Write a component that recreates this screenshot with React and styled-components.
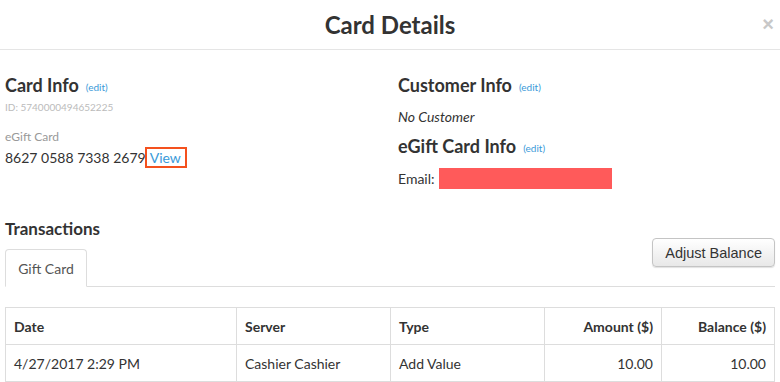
import styled, { createGlobalStyle } from "styled-components"

const GlobalStyle = createGlobalStyle`
  body {
    margin: 0;
    background: #fff;
    font-family: Lato, "Open Sans", sans-serif;
    color: #333;
  }
`

const Modal = styled.div`
  width: 780px;
  height: 382px;
  overflow: hidden;
  background: #fff;
`

const Header = styled.div`
  position: relative;
  height: 49px;
  border-bottom: 1px solid #e5e5e5;
  display: flex;
  align-items: center;
  justify-content: center;
`

const Title = styled.h1`
  margin: 0;
  font-size: 24px;
  font-weight: 700;
  color: #333;
`

const Close = styled.span`
  position: absolute;
  right: 6px;
  top: 13px;
  font-family: "Liberation Sans", Arial, sans-serif;
  font-size: 20px;
  font-weight: 700;
  color: #c8c8c8;
`

const Body = styled.div`
  padding: 0 5px;
`

const InfoGrid = styled.div`
  display: grid;
  grid-template-columns: 393px 1fr;
  padding-top: 24px;
`

const Column = styled.div`
  display: flex;
  flex-direction: column;
`

const SectionTitle = styled.h3`
  margin: 0;
  font-size: ${p => p.$size || 18}px;
  font-weight: 700;
  color: #333;
  line-height: 22px;
`

const Edit = styled.a`
  font-size: 10px;
  font-weight: 400;
  color: #3a9ad9;
  margin-left: 7px;
  vertical-align: 1px;
`

const Muted = styled.div`
  font-size: ${p => p.$size}px;
  color: ${p => p.$color};
  margin-top: ${p => p.$top}px;
  line-height: 16px;
`

const CardNumber = styled.div`
  font-size: 14px;
  color: #333;
  line-height: 18px;
  margin-top: 2px;
  display: flex;
  align-items: center;
`

const ViewLink = styled.a`
  color: #3a9ad9;
  border: 2px solid #f4511e;
  margin-left: -1px;
  padding: 0 4px 0 3px;
  line-height: 17px;
`

const Italic = styled.div`
  font-style: italic;
  font-size: 14px;
  margin: 10px 0 9px;
  line-height: 18px;
`

const EmailRow = styled.div`
  display: flex;
  align-items: center;
  font-size: 14px;
  margin-top: 9px;
`

const Redacted = styled.span`
  display: inline-block;
  width: 173px;
  height: 21px;
  background: #ff5a5a;
  margin-left: 4px;
`

const TxHeader = styled.div`
  margin-top: 29px;
`

const TabRow = styled.div`
  display: flex;
  align-items: flex-end;
  border-bottom: 1px solid #ddd;
  margin-top: 9px;
  height: 37px;
  position: relative;
`

const Tab = styled.div`
  width: 80px;
  height: 36px;
  border: 1px solid #ddd;
  border-bottom-color: #fff;
  border-radius: 4px 4px 0 0;
  margin-bottom: -1px;
  display: flex;
  align-items: center;
  justify-content: center;
  font-size: 14px;
  color: #555;
  background: #fff;
`

const Button = styled.button`
  position: absolute;
  right: 0;
  top: -11px;
  height: 29px;
  padding: 0 12px;
  font-family: "Liberation Sans", Arial, sans-serif;
  font-size: 14.5px;
  color: #333;
  border: 1px solid #c4c4c4;
  border-radius: 4px;
  background: linear-gradient(#fff, #e8e8e8);
  box-shadow: 0 1px 1px rgba(0,0,0,.12);
`

const Table = styled.table`
  margin-top: 20px;
  width: 100%;
  table-layout: fixed;
  border-collapse: collapse;
  border: 1px solid #ddd;
  font-size: 14px;
`

const Th = styled.th`
  border: 1px solid #ddd;
  height: 36px;
  padding: 0 8px;
  text-align: ${p => p.$right ? "right" : "left"};
  font-weight: 700;
  color: #333;
  width: ${p => p.$w ? `${p.$w}px` : "auto"};
  white-space: nowrap;
`

const Td = styled.td`
  border: 1px solid #ddd;
  height: 36px;
  padding: 0 8px;
  text-align: ${p => p.$right ? "right" : "left"};
  color: #333;
  white-space: nowrap;
`

export default function App() {
  return (
    <Modal>
      <GlobalStyle />
      <Header>
        <Title>Card Details</Title>
        <Close>×</Close>
      </Header>
      <Body>
        <InfoGrid>
          <Column>
            <SectionTitle>Card Info<Edit>(edit)</Edit></SectionTitle>
            <Muted $size={10} $color="#bbb" $top={1}>ID: 5740000494652225</Muted>
            <Muted $size={12} $color="#999" $top={14}>eGift Card</Muted>
            <CardNumber>8627 0588 7338 2679<ViewLink>View</ViewLink></CardNumber>
          </Column>
          <Column>
            <SectionTitle>Customer Info<Edit>(edit)</Edit></SectionTitle>
            <Italic>No Customer</Italic>
            <SectionTitle>eGift Card Info<Edit>(edit)</Edit></SectionTitle>
            <EmailRow>Email:<Redacted /></EmailRow>
          </Column>
        </InfoGrid>
        <TxHeader>
          <SectionTitle $size={17}>Transactions</SectionTitle>
        </TxHeader>
        <TabRow>
          <Tab>Gift Card</Tab>
          <Button>Adjust Balance</Button>
        </TabRow>
        <Table>
          <thead>
            <tr>
              <Th $w={214}>Date</Th>
              <Th $w={137}>Server</Th>
              <Th $w={137}>Type</Th>
              <Th $w={100} $right>Amount ($)</Th>
              <Th $right>Balance ($)</Th>
            </tr>
          </thead>
          <tbody>
            <tr>
              <Td>4/27/2017 2:29 PM</Td>
              <Td>Cashier Cashier</Td>
              <Td>Add Value</Td>
              <Td $right>10.00</Td>
              <Td $right>10.00</Td>
            </tr>
          </tbody>
        </Table>
      </Body>
    </Modal>
  )
}
